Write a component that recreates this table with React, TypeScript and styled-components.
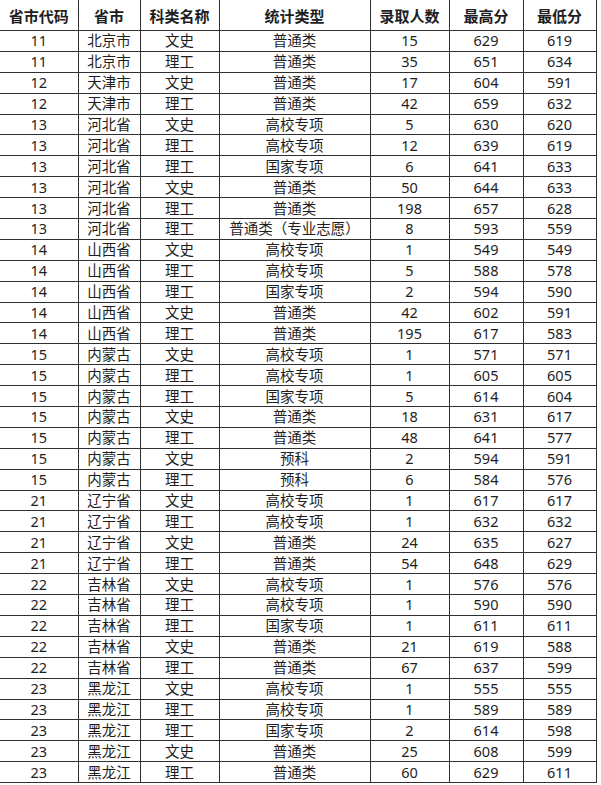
import React from "react";
import styled, { createGlobalStyle } from "styled-components";

const GlobalStyle = createGlobalStyle`
  html, body {
    margin: 0;
    padding: 0;
    background: #ffffff;
  }
`;

const Table = styled.table`
  border-collapse: collapse;
  table-layout: fixed;
  width: 596px;
  font-family: "Noto Sans", "Noto Sans CJK SC", sans-serif;
  font-size: 14.5px;
  color: #1e1e1e;
`;

const HeadCell = styled.th`
  height: 30px;
  padding: 0;
  font-weight: bold;
  font-size: 15px;
  text-align: center;
  white-space: nowrap;
  border-left: 1px solid #2f2f2f;
  border-bottom: 1px solid #2f2f2f;

  &:first-child {
    border-left: none;
  }
`;

const HeadRight = styled(HeadCell)`
  border-right: 1px solid #2f2f2f;
`;

const Row = styled.tr`
  height: 20.9px;
`;

const Cell = styled.td`
  padding: 0;
  line-height: 19px;
  text-align: center;
  white-space: nowrap;
  overflow: hidden;
  border-left: 1px solid #2f2f2f;
  border-bottom: 1px solid #2f2f2f;

  &:first-child {
    border-left: none;
  }

  &:last-child {
    border-right: 1px solid #2f2f2f;
  }
`;

const widths = [78, 62, 79, 151, 79, 74, 73];
const headers = ["省市代码", "省市", "科类名称", "统计类型", "录取人数", "最高分", "最低分"];

type Rec = [string, string, string, string, number, number, number];

const rows: Rec[] = [
  ["11", "北京市", "文史", "普通类", 15, 629, 619],
  ["11", "北京市", "理工", "普通类", 35, 651, 634],
  ["12", "天津市", "文史", "普通类", 17, 604, 591],
  ["12", "天津市", "理工", "普通类", 42, 659, 632],
  ["13", "河北省", "文史", "高校专项", 5, 630, 620],
  ["13", "河北省", "理工", "高校专项", 12, 639, 619],
  ["13", "河北省", "理工", "国家专项", 6, 641, 633],
  ["13", "河北省", "文史", "普通类", 50, 644, 633],
  ["13", "河北省", "理工", "普通类", 198, 657, 628],
  ["13", "河北省", "理工", "普通类（专业志愿）", 8, 593, 559],
  ["14", "山西省", "文史", "高校专项", 1, 549, 549],
  ["14", "山西省", "理工", "高校专项", 5, 588, 578],
  ["14", "山西省", "理工", "国家专项", 2, 594, 590],
  ["14", "山西省", "文史", "普通类", 42, 602, 591],
  ["14", "山西省", "理工", "普通类", 195, 617, 583],
  ["15", "内蒙古", "文史", "高校专项", 1, 571, 571],
  ["15", "内蒙古", "理工", "高校专项", 1, 605, 605],
  ["15", "内蒙古", "理工", "国家专项", 5, 614, 604],
  ["15", "内蒙古", "文史", "普通类", 18, 631, 617],
  ["15", "内蒙古", "理工", "普通类", 48, 641, 577],
  ["15", "内蒙古", "文史", "预科", 2, 594, 591],
  ["15", "内蒙古", "理工", "预科", 6, 584, 576],
  ["21", "辽宁省", "文史", "高校专项", 1, 617, 617],
  ["21", "辽宁省", "理工", "高校专项", 1, 632, 632],
  ["21", "辽宁省", "文史", "普通类", 24, 635, 627],
  ["21", "辽宁省", "理工", "普通类", 54, 648, 629],
  ["22", "吉林省", "文史", "高校专项", 1, 576, 576],
  ["22", "吉林省", "理工", "高校专项", 1, 590, 590],
  ["22", "吉林省", "理工", "国家专项", 1, 611, 611],
  ["22", "吉林省", "文史", "普通类", 21, 619, 588],
  ["22", "吉林省", "理工", "普通类", 67, 637, 599],
  ["23", "黑龙江", "文史", "高校专项", 1, 555, 555],
  ["23", "黑龙江", "理工", "高校专项", 1, 589, 589],
  ["23", "黑龙江", "理工", "国家专项", 2, 614, 598],
  ["23", "黑龙江", "文史", "普通类", 25, 608, 599],
  ["23", "黑龙江", "理工", "普通类", 60, 629, 611],
];

export default function App() {
  return (
    <>
      <GlobalStyle />
      <Table>
        <colgroup>
          {widths.map((w, i) => (
            <col key={i} style={{ width: w }} />
          ))}
        </colgroup>
        <thead>
          <tr>
            {headers.map((h, i) =>
              i === headers.length - 1 ? (
                <HeadRight key={h}>{h}</HeadRight>
              ) : (
                <HeadCell key={h}>{h}</HeadCell>
              )
            )}
          </tr>
        </thead>
        <tbody>
          {rows.map((r, i) => (
            <Row key={i}>
              {r.map((v, j) => (
                <Cell key={j}>{v}</Cell>
              ))}
            </Row>
          ))}
        </tbody>
      </Table>
    </>
  );
}
